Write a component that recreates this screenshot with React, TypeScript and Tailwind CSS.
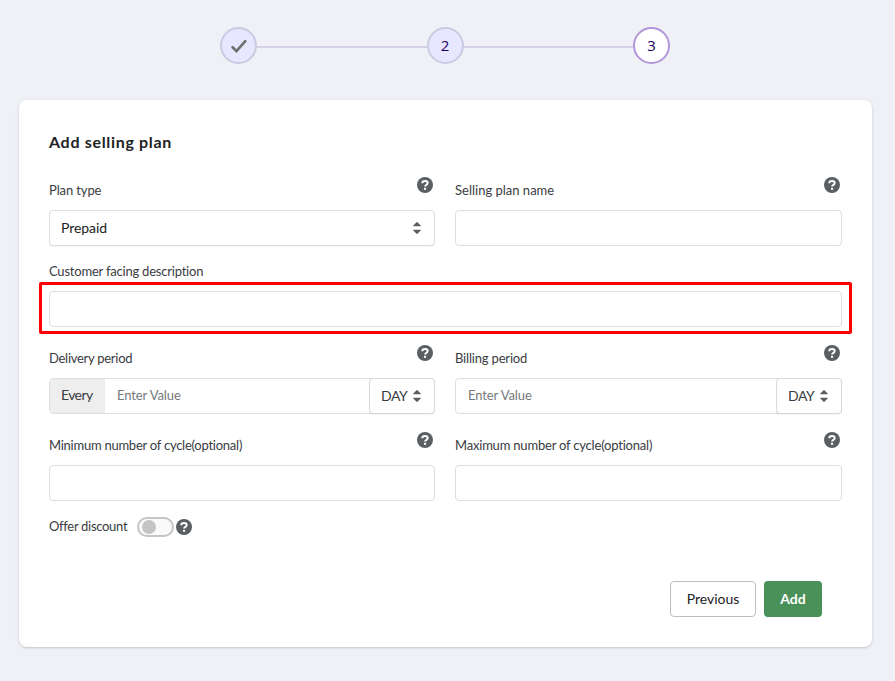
import React from "react";

function HelpIcon() {
  return (
    <svg viewBox="0 0 20 20" className="block h-5 w-5 shrink-0" aria-hidden="true">
      <circle cx="10" cy="10" r="8" fill="#5c5f62" />
      <path d="M7.3 8.3C7.3 6.7 8.5 6 10 6s2.7.8 2.7 2.1c0 1.9-2.6 1.5-2.6 3.4" fill="none" stroke="#fff" strokeWidth="2" />
      <rect x="9" y="12.8" width="2.1" height="2" fill="#fff" />
    </svg>
  );
}

function SelectIcon() {
  return (
    <svg viewBox="0 0 8 14" className="block h-[14px] w-2 shrink-0" aria-hidden="true">
      <path d="M.6 5.2h6.8c.4 0 .5-.4.3-.7L4.4 1.2a.6.6 0 0 0-.8 0L.3 4.5c-.2.3-.1.7.3.7ZM.6 8.8h6.8c.4 0 .5.4.3.7l-3.3 3.3a.6.6 0 0 1-.8 0L.3 9.5c-.2-.3-.1-.7.3-.7Z" fill="#5c5f62" />
    </svg>
  );
}

function Label({ text, spacing }: { text: string; spacing: string }) {
  return (
    <div className="flex h-[35px] items-start justify-between">
      <span className={`mt-[5px] whitespace-nowrap text-[13px] leading-5 ${spacing}`}>{text}</span>
      <HelpIcon />
    </div>
  );
}

const box = "h-9 rounded-[4px] border border-[#dcdddd] bg-white";

function DaySelect() {
  return (
    <div className="-my-px -mr-px flex h-9 w-[66px] shrink-0 items-center justify-between rounded-[4px] border border-[#d9dadb] bg-white pl-[11px] pr-[13px] shadow-[0_1px_0_rgba(0,0,0,0.05)]">
      <span className="whitespace-nowrap text-[14px] leading-5 tracking-[-0.45px]">DAY</span>
      <SelectIcon />
    </div>
  );
}

export default function App() {
  return (
    <div className="h-[681px] w-[895px] overflow-hidden bg-[#f0f1f6] pt-[27px] font-['Lato','Noto_Sans',sans-serif] text-[#3a3c3f]">
      <div className="ml-[220px] flex w-[450px] items-center text-[15px] text-[#1d0060]">
        <div className="flex h-[37px] w-[37px] shrink-0 items-center justify-center rounded-full border-2 border-[#cccae2] bg-[#e7e7ff]">
          <svg viewBox="0 0 18 16" className="h-4 w-[18px]" aria-hidden="true">
            <path d="m2.6 9.3 3.9 3.8L15.3 3.2" fill="none" stroke="#707070" strokeWidth="2.7" strokeLinecap="round" />
          </svg>
        </div>
        <div className="mt-[3px] h-[2px] flex-1 bg-[#d4d1e4]" />
        <div className="flex h-[37px] w-[37px] shrink-0 items-center justify-center rounded-full border-2 border-[#cccae2] bg-[#e7e7ff] font-['Open_Sans',sans-serif]">2</div>
        <div className="mt-[3px] h-[2px] flex-1 bg-[#d4d1e4]" />
        <div className="flex h-[37px] w-[37px] shrink-0 items-center justify-center rounded-full border-2 border-[#b196da] bg-white font-['Open_Sans',sans-serif]">3</div>
      </div>

      <div className="ml-[19px] mt-9 h-[547px] w-[853px] rounded-lg bg-white px-[30px] pt-[30px] shadow-[0_0_5px_rgba(23,24,24,0.05),0_1px_2px_rgba(0,0,0,0.15)]">
        <h1 className="h-[45px] text-[16px] font-bold leading-6 tracking-[0.68px] text-[#202223]">Add selling plan</h1>

        <div className="grid h-[86px] grid-cols-[386px_387px] gap-x-5">
          <div>
            <Label text="Plan type" spacing="tracking-[-0.12px]" />
            <div className={`${box} flex items-center justify-between pl-[11px] pr-[13px] shadow-[0_1px_0_rgba(0,0,0,0.05)]`}>
              <span className="text-[14px] leading-5 tracking-[-0.05px] text-[#202223]">Prepaid</span>
              <SelectIcon />
            </div>
          </div>
          <div>
            <Label text="Selling plan name" spacing="tracking-[0px]" />
            <div className={box} />
          </div>
        </div>

        <div className="relative h-[82px]">
          <div className="h-[30px] text-[13px] leading-5 tracking-[-0.21px]">Customer facing description</div>
          <div className={box} />
          <div className="absolute -left-[10px] top-[21px] h-[52px] w-[813px] rounded-[2px] border-[3px] border-[#fe0000]" />
        </div>

        <div className="grid h-[87px] grid-cols-[386px_387px] gap-x-5">
          <div>
            <Label text="Delivery period" spacing="tracking-[-0.27px]" />
            <div className={`${box} flex text-[13px]`}>
              <div className="w-[55px] rounded-l-[3px] bg-[#eeeeee] pl-[11px] text-[14px] leading-[32px] tracking-[-0.6px]">Every</div>
              <div className="flex-1 pl-3 leading-[32px] tracking-[-0.1px] text-[#76797c]">Enter Value</div>
              <DaySelect />
            </div>
          </div>
          <div>
            <Label text="Billing period" spacing="tracking-[-0.18px]" />
            <div className={`${box} flex text-[13px]`}>
              <div className="flex-1 pl-3 leading-[32px] tracking-[-0.1px] text-[#76797c]">Enter Value</div>
              <DaySelect />
            </div>
          </div>
        </div>

        <div className="grid h-[86px] grid-cols-[386px_387px] gap-x-5">
          <div>
            <Label text="Minimum number of cycle(optional)" spacing="tracking-[-0.25px]" />
            <div className={box} />
          </div>
          <div>
            <Label text="Maximum number of cycle(optional)" spacing="tracking-[-0.2px]" />
            <div className={box} />
          </div>
        </div>

        <div className="flex h-[65px] items-start">
          <span className="w-[88px] whitespace-nowrap text-[13px] leading-5 tracking-[-0.3px]">Offer discount</span>
          <div className="mt-px flex h-5 w-[37px] items-center rounded-full border-2 border-[#c4c4c4] bg-[#fafafa] pl-[3px]">
            <div className="h-[14px] w-[14px] rounded-full bg-[#c4c4c4]" />
          </div>
          <div className="mt-px"><HelpIcon /></div>
        </div>

        <div className="mr-5 flex justify-end gap-2 text-[14px]">
          <button className="h-9 w-[86px] rounded-[4px] border border-[#babfc3] bg-white pb-[2px] text-[#202223]">Previous</button>
          <button className="h-9 w-[58px] rounded-[4px] bg-[#4a9159] pb-[2px] font-bold text-white">Add</button>
        </div>
      </div>
    </div>
  );
}
